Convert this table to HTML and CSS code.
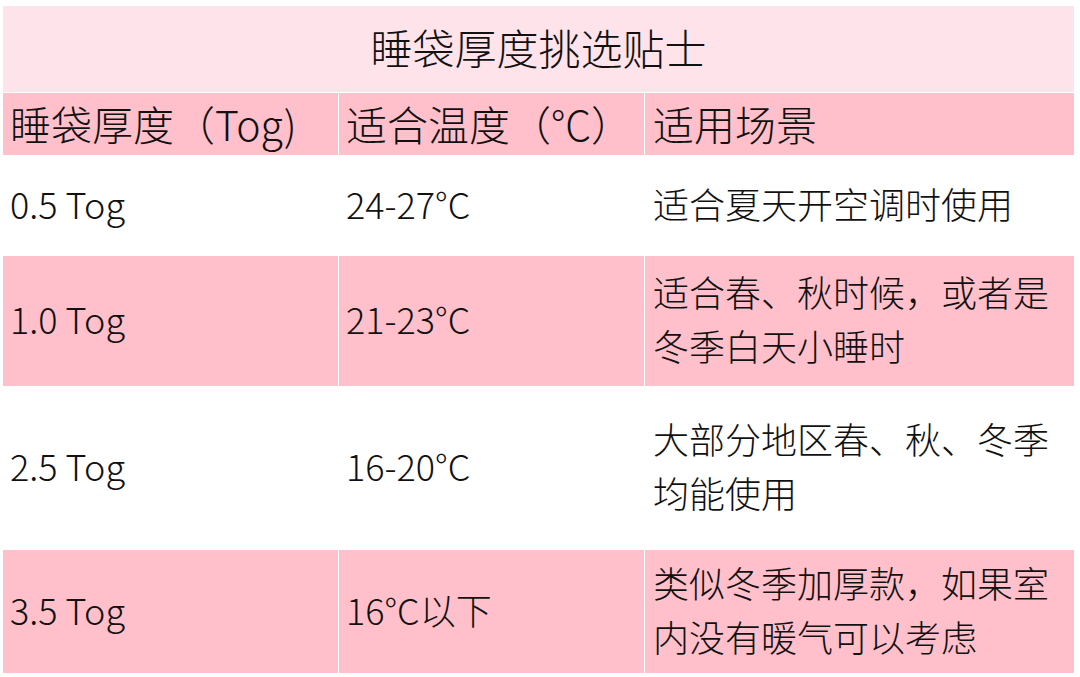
FILE: index.html
```html
<!DOCTYPE html>
<html lang="zh-CN">
<head>
<meta charset="utf-8">
<title>睡袋厚度挑选贴士</title>
<link rel="stylesheet" href="styles.css">
</head>
<body>
<div class="table">
  <div class="title">睡袋厚度挑选贴士</div>
  <div class="cell head">睡袋厚度（Tog)</div>
  <div class="cell head">适合温度（°C）</div>
  <div class="cell head c3">适用场景</div>

  <div class="cell">0.5 Tog</div>
  <div class="cell">24-27°C</div>
  <div class="cell c3">适合夏天开空调时使用</div>

  <div class="cell pink">1.0 Tog</div>
  <div class="cell pink">21-23°C</div>
  <div class="cell pink c3">适合春、秋时候，或者是冬季白天小睡时</div>

  <div class="cell">2.5 Tog</div>
  <div class="cell">16-20°C</div>
  <div class="cell c3">大部分地区春、秋、冬季均能使用</div>

  <div class="cell pink">3.5 Tog</div>
  <div class="cell pink">16°C以下</div>
  <div class="cell pink c3">类似冬季加厚款，如果室内没有暖气可以考虑</div>
</div>
</body>
</html>
```
FILE: styles.css
```css
html, body {
  margin: 0;
  padding: 0;
  background: #ffffff;
}
body {
  width: 1080px;
  height: 677px;
  overflow: hidden;
  font-family: "Noto Sans CJK SC", "Noto Sans", sans-serif;
  font-weight: 300;
  color: #111111;
}
.table {
  display: grid;
  grid-template-columns: 335px 305px 429px;
  grid-template-rows: 86px 62px 99px 130px 162px 123px;
  gap: 1px;
  padding: 6px 0 0 3px;
}
.title {
  grid-column: 1 / 4;
  background: #ffe3ea;
  display: flex;
  align-items: center;
  justify-content: center;
  font-size: 42px;
  line-height: 1;
  padding-bottom: 4px;
}
.cell {
  display: flex;
  align-items: center;
  padding: 0 8px 6px 7px;
  font-size: 36px;
  line-height: 54px;
}
.c3 {
  padding-left: 8px;
  padding-right: 4px;
}
.head {
  background: #ffc0cb;
  font-size: 41px;
  line-height: 1;
  padding-bottom: 2px;
}
.pink {
  background: #ffc0cb;
}
```
